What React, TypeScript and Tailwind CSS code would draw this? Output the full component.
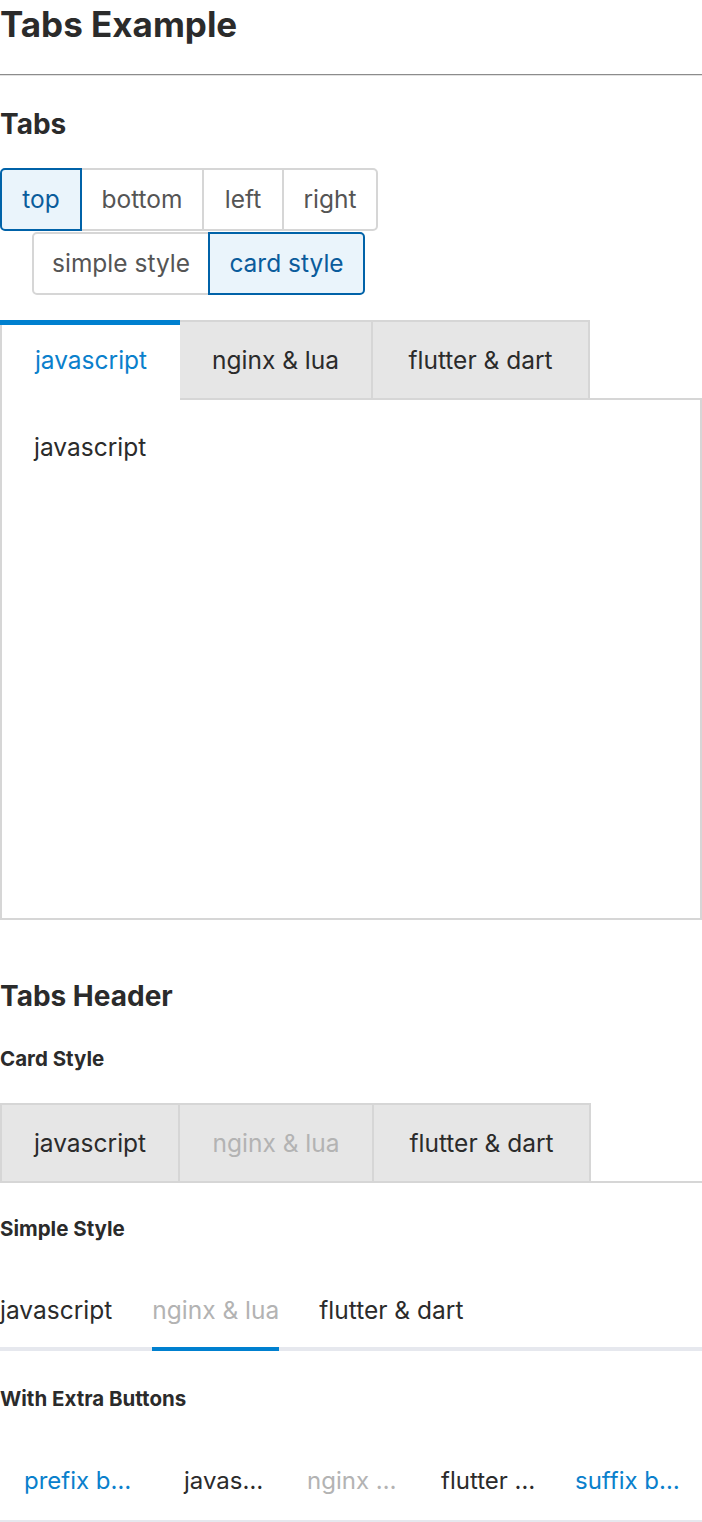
import React from "react";

const font = { fontFamily: "Inter, 'Noto Sans', sans-serif" };

function SegButton({
  label,
  width,
  selected,
  first,
  last,
}: {
  label: string;
  width: string;
  selected?: boolean;
  first?: boolean;
  last?: boolean;
}) {
  return (
    <button
      className={[
        "h-[63px] border-2 text-[24.5px] flex items-center justify-center",
        width,
        first ? "rounded-l-[5px]" : "-ml-[2px]",
        last ? "rounded-r-[5px]" : "",
        selected
          ? "relative z-10 border-[#0062a8] bg-[#eaf4fb] text-[#0a5c9c]"
          : "border-[#d6d6d6] bg-white text-[#555555]",
      ].join(" ")}
    >
      {label}
    </button>
  );
}

function CardTab({
  label,
  width,
  first,
  disabled,
  flat,
}: {
  label: string;
  width: string;
  first?: boolean;
  disabled?: boolean;
  flat?: boolean;
}) {
  return (
    <div
      className={[
        "border-2 border-[#d6d6d6] bg-[#e6e6e6] flex items-center justify-center text-[24.5px]",
        flat ? "h-[78px] border-b-0" : "h-[80px]",
        width,
        first ? "" : "-ml-[2px]",
        disabled ? "text-[#b3b3b3]" : "text-[#2b2b2b]",
      ].join(" ")}
    >
      {label}
    </div>
  );
}

export default function App() {
  return (
    <div className="w-[702px] bg-white text-[#2b2b2b]" style={font}>
      <h1 className="text-[35px] font-bold leading-[48px] h-[48px]">Tabs Example</h1>
      <div className="mt-[26px] border-t border-[#8c8c8c] border-b border-b-[#e2e2e2]" />

      <h2 className="mt-[32px] text-[28px] font-bold leading-[32px]">Tabs</h2>

      <div className="mt-[28px] flex">
        <SegButton label="top" width="w-[82px]" selected first />
        <SegButton label="bottom" width="w-[124px]" />
        <SegButton label="left" width="w-[82px]" />
        <SegButton label="right" width="w-[96px]" last />
      </div>
      <div className="mt-[1px] ml-[32px] flex">
        <SegButton label="simple style" width="w-[178px]" first />
        <SegButton label="card style" width="w-[157px]" selected last />
      </div>

      <div className="mt-[25px]">
        <div className="flex relative z-10">
          <div className="w-[180px] h-[80px] border-l-2 border-[#d6d6d6] bg-white relative flex items-center justify-center text-[24.5px] text-[#0a80cc]">
            <div className="absolute left-[-2px] right-0 top-0 h-[5px] bg-[#0080cf]" />
            javascript
          </div>
          <CardTab label="nginx & lua" width="w-[195px]" />
          <CardTab label="flutter & dart" width="w-[219px]" />
        </div>
        <div className="-mt-[2px] h-[522px] border-2 border-[#d6d6d6] px-[32px] pt-[33px] text-[24.5px] leading-[28px]">
          javascript
        </div>
      </div>

      <h2 className="mt-[60px] text-[28px] font-bold leading-[32px]">Tabs Header</h2>

      <h3 className="mt-[35px] text-[20.5px] font-bold leading-[24px]">Card Style</h3>
      <div className="mt-[32px] flex border-b-2 border-[#d6d6d6]">
        <CardTab label="javascript" width="w-[180px]" first flat />
        <CardTab label="nginx & lua" width="w-[196px]" disabled flat />
        <CardTab label="flutter & dart" width="w-[219px]" flat />
      </div>

      <h3 className="mt-[34px] text-[20.5px] font-bold leading-[24px]">Simple Style</h3>
      <div className="mt-[55px] flex gap-[40px] border-b-4 border-[#e6e8ee] text-[24.5px]">
        <div className="pb-[23px] leading-[28px]">javascript</div>
        <div className="pb-[23px] leading-[28px] text-[#b3b3b3] relative">
          nginx &amp; lua
          <div className="absolute left-0 right-0 -bottom-[4px] h-[4px] bg-[#0080cf]" />
        </div>
        <div className="pb-[23px] leading-[28px]">flutter &amp; dart</div>
      </div>

      <h3 className="mt-[36px] text-[20.5px] font-bold leading-[24px]">With Extra Buttons</h3>
      <div className="mt-[56px] flex border-b-4 border-[#e6e8ee] text-[24px] leading-[28px] pb-[25px]">
        <div className="ml-[24px] w-[160px] text-[#0a80cc]">prefix b…</div>
        <div className="w-[123px]">javas…</div>
        <div className="w-[134px] text-[#b3b3b3]">nginx …</div>
        <div className="w-[134px]">flutter …</div>
        <div className="text-[#0a80cc]">suffix b…</div>
      </div>
    </div>
  );
}
